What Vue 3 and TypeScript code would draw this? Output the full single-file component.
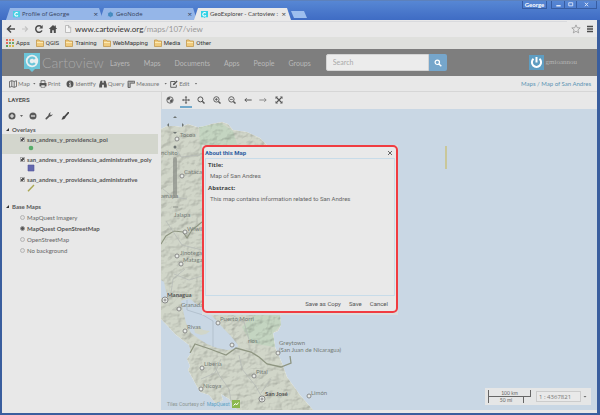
<script setup lang="ts">
import { ref } from 'vue'

interface Layer {
  id: string
  name: string
  kind: 'point' | 'polygon' | 'line'
  visible: boolean
}

interface Place {
  name: string
  x: number
  y: number
  lx: number
  ly: number
  major?: boolean
}

const bookmarks = ['QGIS', 'Training', 'WebMapping', 'Media', 'Other']
const navLinks = ['Layers', 'Maps', 'Documents', 'Apps', 'People', 'Groups']

const layers = ref<Layer[]>([
  { id: 'poi', name: 'san_andres_y_providencia_poi', kind: 'point', visible: true },
  { id: 'poly', name: 'san_andres_y_providencia_administrative_poly', kind: 'polygon', visible: true },
  { id: 'admin', name: 'san_andres_y_providencia_administrative', kind: 'line', visible: true },
])
const selectedLayer = ref('poi')

const baseMaps = ['MapQuest Imagery', 'MapQuest OpenStreetMap', 'OpenStreetMap', 'No background']
const baseMap = ref('MapQuest OpenStreetMap')

const search = ref('')
const address = ref('www.cartoview.org')
const scale = ref('1 : 4367821')
const dialogOpen = ref(true)

const places: Place[] = [
  { name: 'Tocoa', x: 16, y: 30, lx: 19, ly: 28 },
  { name: 'Catacamas', x: 21, y: 67, lx: 23, ly: 65 },
  { name: 'Wiwilí', x: 24, y: 123, lx: 26, ly: 122 },
  { name: 'Jinotega', x: 16, y: 147, lx: 19, ly: 146 },
  { name: 'Matagalpa', x: 20, y: 155, lx: 22, ly: 153 },
  { name: 'Managua', x: 4, y: 191, lx: 6, ly: 188, major: true },
  { name: 'Granada', x: 18, y: 200, lx: 20, ly: 198 },
  { name: 'Rivas', x: 24, y: 222, lx: 26, ly: 220 },
  { name: 'Puerto Morri', x: 57, y: 214, lx: 59, ly: 212 },
  { name: 'Liberia', x: 41, y: 259, lx: 43, ly: 257 },
  { name: 'Nicoya', x: 40, y: 280, lx: 42, ly: 279 },
  { name: 'Pital', x: 93, y: 267, lx: 95, ly: 265 },
  { name: 'San José', x: 101, y: 290, lx: 104, ly: 287, major: true },
  { name: 'Limón', x: 148, y: 287, lx: 150, ly: 286 },
]
</script>

<template>
  <div class="window">
    <header class="tabstrip">
      <div class="tab">
        <svg class="fav" viewBox="0 0 8 8"><path d="M0 0h8v7H5L4 8 3 7H0z" fill="#48cfe4" /><path d="M5.6 2.6A2 2 0 1 0 5.6 5" fill="none" stroke="#fff" stroke-width="1.2" /></svg>
        <span class="tab-title">Profile of George</span>
        <button class="close" aria-label="Close Profile of George">×</button>
      </div>
      <div class="tab">
        <svg class="fav" viewBox="0 0 8 8"><circle cx="4" cy="4" r="2.6" fill="#3c81b9" /><path d="M4 .8v6.4M1 2.4l6 3.2M7 2.4L1 5.6" stroke="#4b91c5" stroke-width="1" /></svg>
        <span class="tab-title">GeoNode</span>
        <button class="close" aria-label="Close GeoNode">×</button>
      </div>
      <div class="tab active">
        <svg class="fav" viewBox="0 0 8 8"><path d="M0 0h8v7H5L4 8 3 7H0z" fill="#33d2e6" /><path d="M5.6 2.6A2 2 0 1 0 5.6 5" fill="none" stroke="#fff" stroke-width="1.2" /></svg>
        <span class="tab-title">GeoExplorer - Cartoview :</span>
        <button class="close" aria-label="Close GeoExplorer">×</button>
      </div>
      <button class="new-tab" aria-label="New tab"></button>
      <div class="win-controls">
        <button class="user-btn">George</button>
        <div class="win-btns">
          <button aria-label="Minimize"><svg viewBox="0 0 8 8"><path d="M1.5 5.5h5" stroke="#fff" stroke-width="1.4" /></svg></button>
          <button aria-label="Maximize"><svg viewBox="0 0 8 8"><path d="M2 2h4.5v3.5H2z" fill="none" stroke="#dfe8fa" /></svg></button>
          <button class="wide" aria-label="Close window"><svg viewBox="0 0 8 8"><path d="M2.2 2l3.6 4M5.8 2L2.2 6" stroke="#dfe8fa" stroke-width="1.1" /></svg></button>
        </div>
      </div>
    </header>

    <div class="toolbar">
      <button class="back" aria-label="Back"><svg viewBox="0 0 10 10"><path d="M9 5H2M5 1.500L1.500 5 5 8.500" fill="none" stroke="#4c4c4c" stroke-width="1.500" /></svg></button>
      <button aria-label="Forward"><svg viewBox="0 0 10 10"><path d="M2 5h5M5 2.500L7.500 5 5 7.500" fill="none" stroke="#c4c4c4" stroke-width="1.200" /></svg></button>
      <button aria-label="Reload"><svg viewBox="0 0 10 10"><path d="M8 6.500A3.300 3.300 0 1 1 7.500 2.800" fill="none" stroke="#4c4c4c" stroke-width="1.500" /><path d="M8.700 1v3.500H5.200z" fill="#4c4c4c" /></svg></button>
      <button aria-label="Home"><svg viewBox="0 0 10 10"><path d="M5 1L.8 5h1.400v4h2V6.200h1.600V9h2V5h1.400L7.800 3.600V1.500H6.600v1z" fill="#4c4c4c" /></svg></button>
      <label class="address">
        <svg class="page-icon" viewBox="0 0 8 8"><path d="M1.500.5h3.200l2 2v5H1.500zM4.500.5v2.200h2.200" fill="#f4f4f4" stroke="#a9a9a9" stroke-width=".7" /></svg>
        <span class="url">{{ address }}<span class="path">/maps/107/view</span></span>
      </label>
      <button aria-label="Bookmark this page"><svg viewBox="0 0 10 10"><path d="M5 .9l1.200 2.800 3 .2-2.300 2 .8 3L5 7.300 2.300 8.900l.8-3-2.300-2 3-.2z" fill="none" stroke="#999" stroke-width=".8" /></svg></button>
      <button aria-label="Menu"><svg viewBox="0 0 10 10"><path d="M2 2.500h6M2 5h6M2 7.500h6" stroke="#4c4c4c" stroke-width="1.600" /></svg></button>
    </div>

    <nav class="bookmarks" aria-label="Bookmarks">
      <a href="#">
        <svg viewBox="0 0 8 8"><path d="M0 0h2v2H0zM0 3h2v2H0z" fill="#e36a5c" /><path d="M3 0h2v2H3zM6 0h2v2H6z" fill="#e7895b" /><path d="M3 3h2v2H3zM6 3h2v2H6z" fill="#6aa66a" /><path d="M0 6h2v2H0z" fill="#5b9d5b" /><path d="M3 6h2v2H3zM6 6h2v2H6z" fill="#d9b64d" /></svg>
        Apps
      </a>
      <a v-for="b in bookmarks" :key="b" href="#">
        <svg viewBox="0 0 8 8"><path d="M.5 1h2.700l.8 1h3.500v5.500h-7z" fill="#f0cb7d" stroke="#bd8f40" stroke-width=".7" /><path d="M1 3.500h6" stroke="#fff0c2" stroke-width=".8" /></svg>
        {{ b }}
      </a>
    </nav>

    <div class="site-header">
      <a class="brand" href="#" aria-label="Cartoview home">
        <svg viewBox="0 0 16 19"><path d="M0 0h16v16h-5l-3 3-3-3H0z" fill="#6cc5d9" /><circle cx="8" cy="8" r="6.200" fill="#e9eff1" /><path d="M10.800 6A3.400 3.400 0 1 0 10.800 10" fill="none" stroke="#6cc5d9" stroke-width="2.200" /></svg>
        <span>Cartoview</span>
      </a>
      <nav class="site-nav">
        <a v-for="n in navLinks" :key="n" href="#">{{ n }}</a>
      </nav>
      <form class="search" @submit.prevent>
        <input v-model="search" type="text" placeholder="Search" aria-label="Search" />
        <button aria-label="Submit search"><svg viewBox="0 0 8 8"><circle cx="3.300" cy="3.300" r="2.200" fill="none" stroke="#fff" stroke-width="1.200" /><path d="M5 5l2.300 2.300" stroke="#fff" stroke-width="1.400" /></svg></button>
      </form>
      <a class="account" href="#">
        <svg viewBox="0 0 15 15"><path d="M0 0h15v15H0z" fill="#5f9dc1" /><path d="M4.500 3.800a4.600 4.600 0 1 0 6 0" fill="none" stroke="#fff" stroke-width="2" /><path d="M7.500 2v5.500" stroke="#fff" stroke-width="2" /></svg>
        <span>gmioannou</span>
      </a>
    </div>

    <div class="actions">
      <button><svg viewBox="0 0 8 8"><path d="M.5 1.500l2.300-.8 2.400.8 2.300-.8v5.800l-2.300.8-2.400-.8-2.300.8zM2.800.7v5.800M5.200 1.500v5.800" fill="none" stroke="#555" stroke-width=".8" /></svg>Map<i class="caret"></i></button>
      <button><svg viewBox="0 0 8 8"><path d="M2 3V.7h4V3" fill="none" stroke="#555" stroke-width=".8" /><path d="M.5 3h7v3.300h-7z" fill="#555" /><path d="M2 5h4v2.300H2z" fill="#eee" stroke="#555" stroke-width=".6" /></svg>Print</button>
      <button class="act-identify"><svg viewBox="0 0 8 8"><circle cx="4" cy="4" r="3.500" fill="#555" /><path d="M3.200 3.500h1v2.300M3 6h2.200M3.600 2.200h.9" stroke="#eee" fill="none" stroke-width=".9" /></svg>Identify</button>
      <button><svg viewBox="0 0 8 8"><path d="M1.500.8h1.800v2h1.400v-2h1.800L7.800 5v2.500H4.900V4.800H3.100v2.700H.2V5z" fill="#555" /></svg>Query</button>
      <button><svg viewBox="0 0 8 8"><path d="M1 7.500V1.200h6.700v2H3.200v4.300z" fill="#bbb" stroke="#555" stroke-width=".8" /><path d="M3 1.200v1M5 1.200v1M1 4h1M1 6h1" stroke="#555" stroke-width=".6" /></svg>Measure<i class="caret far"></i></button>
      <button><svg viewBox="0 0 8 8"><path d="M5 1.500H.7v5.800h5.600V4.800" fill="none" stroke="#555" stroke-width=".9" /><path d="M2.800 5.300l.4-1.500L6.500.5l1.100 1.100-3.300 3.300z" fill="#555" /></svg>Edit<i class="caret far"></i></button>
      <div class="crumbs"><a href="#">Maps</a> / <span>Map of San Andres</span></div>
    </div>

    <main class="main">
      <aside class="sidebar">
        <h2>LAYERS</h2>
        <div class="layer-tools">
          <button aria-label="Add layers"><svg viewBox="0 0 8 8"><circle cx="4" cy="4" r="3.500" fill="#5a5a5a" /><path d="M2 4h4M4 2v4" stroke="#eee" stroke-width="1.100" /></svg><i class="caret far"></i></button>
          <button aria-label="Remove layer"><svg viewBox="0 0 8 8"><circle cx="4" cy="4" r="3.500" fill="#5a5a5a" /><path d="M2 4h4" stroke="#eee" stroke-width="1.200" /></svg></button>
          <button aria-label="Layer properties"><svg viewBox="0 0 8 8"><path d="M1.300 6.700l3.300-3.300" stroke="#555" stroke-width="1.700" stroke-linecap="round" /><path d="M7.500 1.900L6 3.200 4.800 2 6.100.5A2.300 2.300 0 0 0 3.600 3.300L4.700 4.400A2.300 2.300 0 0 0 7.500 1.900z" fill="#555" /></svg></button>
          <button aria-label="Edit styles"><svg viewBox="0 0 8 8"><path d="M7.500.5L4 4.500" stroke="#444" stroke-width="1.700" stroke-linecap="round" /><path d="M3.300 3.800l1.200 1.200C4.500 7.200 2 7.700.3 7.200c1.400-.5.900-3 3-3.400z" fill="#444" /></svg></button>
        </div>

        <section class="group">
          <h3><svg viewBox="0 0 4 4"><path d="M4 0v4H0z" fill="#333" /></svg>Overlays</h3>
          <div v-for="l in layers" :key="l.id" class="layer" :class="{ selected: l.id === selectedLayer }" @click="selectedLayer = l.id">
            <label><input v-model="l.visible" type="checkbox" /><span>{{ l.name }}</span></label>
            <svg class="legend" viewBox="0 0 8 8">
              <circle v-if="l.kind === 'point'" cx="4" cy="4" r="2.300" fill="#57ad68" />
              <path v-else-if="l.kind === 'polygon'" d="M1 1h6v6H1z" fill="#6468ae" stroke="#50549c" stroke-width=".6" />
              <path v-else d="M1 7.200L7 1" stroke="#aaa752" stroke-width="1.400" />
            </svg>
          </div>
        </section>

        <section class="group base">
          <h3><svg viewBox="0 0 4 4"><path d="M4 0v4H0z" fill="#333" /></svg>Base Maps</h3>
          <label v-for="b in baseMaps" :key="b" class="base-row" :class="{ chosen: b === baseMap }">
            <input v-model="baseMap" type="radio" name="basemap" :value="b" /><span>{{ b }}</span>
          </label>
        </section>
      </aside>

      <section class="map-panel">
        <div class="map-tools">
          <button aria-label="Globe"><svg viewBox="0 0 8 8"><circle cx="4" cy="4" r="3.200" fill="#ddd" stroke="#555" stroke-width=".8" /><path d="M1 2.500L3 1l1.500.8L3.500 3.500 1.500 4zM4 4.500l2-1.500 1 1-1 2-1.700.8z" fill="#555" /></svg></button>
          <button class="current" aria-label="Pan map"><svg viewBox="0 0 8 8"><path d="M4 .8v6.400M.8 4h6.400" stroke="#555" stroke-width=".9" /><path d="M4 0l1.300 1.500H2.700zM4 8l1.300-1.500H2.700zM0 4l1.500-1.300v2.600zM8 4L6.500 2.700v2.600z" fill="#555" /></svg></button>
          <button aria-label="Zoom box"><svg viewBox="0 0 8 8"><circle cx="3.400" cy="3.400" r="2.500" fill="none" stroke="#555" /><path d="M5.300 5.300l2.200 2.200" stroke="#555" stroke-width="1.400" /></svg></button>
          <button aria-label="Zoom in"><svg viewBox="0 0 8 8"><circle cx="3.400" cy="3.400" r="2.700" fill="none" stroke="#555" stroke-width=".9" /><path d="M5.400 5.400l2.100 2.100" stroke="#555" stroke-width="1.400" /><path d="M2 3.400h2.800M3.400 2v2.800" stroke="#555" stroke-width=".8" /></svg></button>
          <button aria-label="Zoom out"><svg viewBox="0 0 8 8"><circle cx="3.400" cy="3.400" r="2.700" fill="none" stroke="#555" stroke-width=".9" /><path d="M5.400 5.400l2.100 2.100" stroke="#555" stroke-width="1.400" /><path d="M2 3.400h2.800" stroke="#555" stroke-width=".8" /></svg></button>
          <button aria-label="Previous extent"><svg viewBox="0 0 8 8"><path d="M7.700 4H1M2.700 2.300L.8 4l1.900 1.700" fill="none" stroke="#555" /></svg></button>
          <button aria-label="Next extent"><svg viewBox="0 0 8 8"><path d="M.3 4H7M5.300 2.300L7.200 4 5.300 5.700" fill="none" stroke="#8a8a8a" /></svg></button>
          <button aria-label="Zoom to full extent"><svg viewBox="0 0 8 8"><path d="M1.500 1.500l5 5M6.500 1.500l-5 5" stroke="#555" stroke-width="1.100" /><path d="M.5 3V.5H3zM5 .5h2.500V3zM.5 5v2.500H3zM7.500 5v2.500H5z" fill="#555" /></svg></button>
        </div>

        <div class="map">
          <svg class="canvas" role="img" aria-label="Map of Central America">
            <defs>
              <filter id="relief" x="0" y="0" width="100%" height="100%" color-interpolation-filters="sRGB">
                <feTurbulence type="fractalNoise" baseFrequency="0.11 0.15" numOctaves="4" seed="7" />
                <feDiffuseLighting lighting-color="#fff" surfaceScale="0.700" diffuseConstant="1.200"><feDistantLight azimuth="225" elevation="55" /></feDiffuseLighting>
                <feComposite in2="SourceGraphic" operator="in" result="lit" />
                <feBlend in="SourceGraphic" in2="lit" mode="multiply" />
              </filter>
            </defs>
            <g filter="url(#relief)">
              <path d="M0 20L6 17 14 17 20 18 27 15 39 19 50 15 61 13 67 15 72 21 86 23 99 29 107 37 107 206H119L120 216 117 222 112 224 114 238 121 254 126 268 139 286 153 302H77L72 296 68 290 60 285 62 291 55 295 48 286 39 283 34 274 27 261 29 257 26 250 30 244 28 236 15 226 0 210z" fill="#d1d6c9" />
              <path d="M38 18l22-4 12 8 8 26-40 6zM93 206h26l1 10-8 8 2 14-24-4-9-16z" fill="#c4d5c1" />
            </g>
            <path d="M22 201L20 192 28 189 34 194 44 200 57 213 62 219 69 226 77 236 76 240 66 241 56 239 46 235 38 230 30 224 25 214zM0 171l3 2 2 10 4 3-4 3H0z" fill="#c9d7e4" />
            <path d="M33 220l6-2 3 3 7 1-4 3-5 1-6-2z" fill="#d1d6c9" />
            <path d="M26 191v10l16 5 10 6v26" fill="none" stroke="#a9b8c4" stroke-width=".7" />
            <path d="M0 135L5 127 13 122 22 123 26 129 31 121 41 113" fill="none" stroke="#8e9581" stroke-width="1.100" />
            <path d="M29 244l5-9 15 5 16 6 10-7 15 4 8 5 8 7 14 3 10-4-1-7" fill="none" stroke="#8e9581" stroke-width="1.300" />
            <path d="M52 254l6 12 10 14 2 12M78 246l3 14 13 16 8 14M71 206l12 7 6 21M60 250l-6 14-14 6M110 270l-10 14M24 160l-12 10-2 14M13 165l15 6 13-4M2 80l10 8 14 2M14 38l6 10 19-2M5 112l16 24 20 5" fill="none" stroke="#b3b8b5" stroke-width=".7" />
            <path d="M285 37v23" stroke="#c9c79a" stroke-width="2" />
            <g fill="#e8ebe8" stroke="#777" stroke-width=".8">
              <g v-for="p in places" :key="p.name">
                <circle :cx="p.x" :cy="p.y" :r="p.major ? 3 : 2" />
                <circle v-if="p.major" :cx="p.x" :cy="p.y" r="1" />
              </g>
              <circle cx="71" cy="236" r="2" /><circle cx="117" cy="244" r="2" />
            </g>
            <text v-for="p in places" :key="p.name" :x="p.lx" :y="p.ly" :class="{ major: p.major }">{{ p.name }}</text>
            <text x="13" y="108">Jalapa</text>
            <text x="0" y="46">nchito</text>
            <text x="0" y="89">amapa</text>
            <text x="87" y="234">rlos</text>
            <text x="118" y="236">Greytown</text>
            <text x="118" y="243">(San Juan de Nicaragua)</text>
            <g fill="#6e7573">
              <path d="M14 7l2 2h-4zM14 25l2-2h-4zM6 16l2-2v4zM23 16l-2-2v4z" />
              <circle cx="14" cy="38" r="1.500" />
            </g>
            <rect x="12" y="48" width="4" height="41" rx="2" fill="#8c9089" opacity=".75" />
            <path d="M12 98h5" stroke="#8c9089" />
          </svg>
          <footer class="map-footer">
            <p class="credit">Tiles Courtesy of <a href="#">MapQuest</a>
              <svg viewBox="0 0 8 8"><path d="M0 0h8v8H0z" fill="#8cb850" /><path d="M1.500 5.500l2-2 1 1.500 2-2.500" fill="none" stroke="#fff" /></svg>
            </p>
            <div class="scale-box">
              <div class="scale-line">
                <span class="km">100 km</span>
                <span class="mi">50 mi</span>
              </div>
              <input v-model="scale" type="text" aria-label="Map scale" />
              <button aria-label="Choose scale"><i class="caret"></i></button>
            </div>
          </footer>
        </div>
      </section>
    </main>

    <div v-if="dialogOpen" class="dialog-shell">
      <div class="dialog" role="dialog" aria-labelledby="about-title">
        <header>
          <h2 id="about-title">About this Map</h2>
          <button aria-label="Close dialog" @click="dialogOpen = false"><svg viewBox="0 0 6 6"><path d="M1 1l4 4M5 1L1 5" stroke="#666" /></svg></button>
        </header>
        <dl>
          <dt>Title:</dt>
          <dd>Map of San Andres</dd>
          <dt>Abstract:</dt>
          <dd>This map contains information related to San Andres</dd>
        </dl>
        <footer>
          <button>Save as Copy</button>
          <button>Save</button>
          <button @click="dialogOpen = false">Cancel</button>
        </footer>
      </div>
    </div>
  </div>
</template>

<style>
body {
  background: #e8e8e8;
}
</style>

<style scoped>
* {
  box-sizing: border-box;
  margin: 0;
  padding: 0;
}

button {
  display: flex;
  align-items: center;
  border: 0;
  background: none;
  color: inherit;
  font: inherit;
}

a {
  color: inherit;
  text-decoration: none;
}

svg {
  display: block;
  flex: none;
}

.window {
  position: relative;
  display: flex;
  flex-direction: column;
  min-height: 100vh;
  border: solid #3a5e9e;
  border-width: 0 3px 2px 2px;
  background: #e8e8e8;
  color: #666;
  font: 6px/8px Lato, sans-serif;
}

/* Browser chrome */
.tabstrip {
  display: flex;
  align-items: flex-end;
  height: 20px;
  margin-right: -3px;
  margin-left: -2px;
  padding-left: 6px;
  border-top: 1px solid #5d81bb;
  background: linear-gradient(#5787d4, #3f6cc4);
}

.tab {
  display: flex;
  align-items: center;
  width: 97px;
  height: 12px;
  margin-right: -3px;
  padding: 0 5px 0 7px;
  background: #95b6e8;
  color: #34405a;
  font: 6px/12px "Open Sans", sans-serif;
  clip-path: polygon(4px 0, 93px 0, 100% 100%, 0 100%);
}

.tab.active {
  background: #e9e9e9;
  color: #444;
}

.fav {
  width: 7px;
  height: 7px;
  margin-right: 2px;
}

.tab-title {
  flex: 1;
  white-space: nowrap;
}

.tab.active .tab-title {
  font-family: Lato, sans-serif;
}

.close {
  font: 8px/8px "Open Sans", sans-serif;
}

.new-tab {
  width: 16px;
  height: 7px;
  margin: 0 0 2px 3px;
  background: #9dbeee;
  clip-path: polygon(0 0, 13px 0, 100% 100%, 3px 100%);
}

.win-controls {
  display: flex;
  align-items: flex-start;
  gap: 4px;
  height: 100%;
  margin-right: 3px;
  margin-left: auto;
}

.user-btn {
  justify-content: center;
  width: 25px;
  height: 8px;
  border: 1px solid #385da1;
  border-top: 0;
  color: #fff;
  font: bold 6px/8px Lato, sans-serif;
}

.win-btns {
  display: flex;
  height: 8px;
  border: 1px solid #385da1;
  border-top: 0;
}

.win-btns button {
  justify-content: center;
  width: 12px;
}

.win-btns button + button {
  border-left: 1px solid #385da1;
}

.win-btns .wide {
  width: 20px;
}

.win-btns svg {
  width: 7px;
  height: 7px;
}

.toolbar {
  display: flex;
  align-items: center;
  gap: 4px;
  height: 17px;
  padding: 0 2px 0 4px;
  background: #e9e9e9;
}

.toolbar svg {
  width: 10px;
  height: 10px;
}

.address {
  display: flex;
  flex: 1;
  align-items: center;
  gap: 3px;
  margin-left: 2px;
  border-top: 1px solid #d9dadd;
  color: #333;
  font: 8px/15px Lato, sans-serif;
}

.address .page-icon {
  width: 8px;
  height: 8px;
}

.path {
  color: #999;
}

.bookmarks {
  display: flex;
  align-items: center;
  gap: 6px;
  height: 12px;
  padding-left: 4px;
  background: #dfe0dd;
  color: #333;
  font: 6px/10px Roboto, sans-serif;
}

.bookmarks a {
  display: flex;
  align-items: center;
  gap: 2px;
}

.bookmarks svg {
  width: 8px;
  height: 8px;
}

/* Site header */
.site-header {
  display: flex;
  align-items: center;
  height: 27px;
  padding: 0 20px 0 22px;
  background: #7e7e7e;
}

.brand {
  display: flex;
  align-items: center;
  gap: 2px;
  width: 86px;
  color: #a9a9a9;
  font: 300 14px/20px Lato, sans-serif;
}

.brand svg {
  width: 16px;
  height: 19px;
}

.site-nav {
  display: flex;
  gap: 14px;
  color: #b9b9b9;
  font: 7px/12px Lato, sans-serif;
}

.search {
  display: flex;
  width: 121px;
  height: 17px;
  margin-left: 15px;
}

.search input {
  flex: 1;
  min-width: 0;
  padding: 0 6px;
  border: 1px solid #d4d4d4;
  border-radius: 2px 0 0 2px;
  background: #ececec;
  font: 7px/15px Lato, sans-serif;
}

.search input::placeholder {
  color: #aaa;
}

.search button {
  justify-content: center;
  width: 18px;
  border-radius: 0 2px 2px 0;
  background: #76a6cb;
}

.search svg {
  width: 8px;
  height: 8px;
}

.account {
  display: flex;
  align-items: center;
  gap: 2px;
  margin-left: auto;
  color: #b4b4b4;
  font: 7px/15px "Liberation Serif", serif;
}

.account svg {
  width: 15px;
  height: 15px;
}

/* Action bar */
.actions {
  display: flex;
  align-items: center;
  gap: 3px;
  height: 16px;
  padding: 0 6px 0 7px;
  border-bottom: 1px solid #d6d6d6;
  color: #777;
}

.actions button {
  gap: 1px;
}

.actions .act-identify {
  margin-left: 3px;
}

.actions svg {
  width: 8px;
  height: 8px;
}

.caret {
  width: 3px;
  height: 2px;
  margin-left: 2px;
  background: #666;
  clip-path: polygon(0 0, 100% 0, 50% 100%);
}

.caret.far {
  margin-left: 4px;
}

.crumbs {
  margin-left: auto;
  color: #5b93b3;
}

/* Layout */
.main {
  display: flex;
  flex: 1;
  padding-bottom: 3px;
}

.sidebar {
  width: 159px;
  padding-right: 3px;
}

.sidebar h2 {
  padding: 4px 6px;
  color: #555;
  font: bold 6px/8px Roboto, sans-serif;
}

.layer-tools {
  display: flex;
  gap: 8px;
  padding: 4px 6px 5px;
}

.layer-tools button:first-child {
  margin-right: -2px;
}

.layer-tools svg {
  width: 8px;
  height: 8px;
}

.group h3 {
  display: flex;
  align-items: center;
  gap: 3px;
  height: 9px;
  padding-left: 4px;
  color: #555;
  font: bold 6px/9px Lato, sans-serif;
}

.group h3 svg {
  width: 3px;
  height: 3px;
}

.layer {
  height: 20px;
  padding: 1px 0 0 18px;
}

.layer.selected {
  background: #d3d6cd;
}

.layer label,
.base-row {
  display: flex;
  align-items: center;
  gap: 2px;
}

.layer label {
  height: 9px;
  color: #555;
  font: bold 6px/9px Lato, sans-serif;
}

.legend {
  width: 8px;
  height: 8px;
  margin-left: 7px;
}

input[type="checkbox"],
input[type="radio"] {
  width: 5px;
  height: 5px;
  appearance: none;
  border: 1px solid #b5b5b5;
  background: #e2e2e2;
}

input[type="checkbox"]:checked {
  border-color: #aaa;
  background: linear-gradient(135deg, #e2e2e2 30%, #555 30% 70%, #e2e2e2 70%);
}

input[type="radio"] {
  border-radius: 50%;
}

input[type="radio"]:checked {
  border-color: #999;
  background: #555;
}

.group.base {
  padding-top: 8px;
}

.base-row {
  height: 11px;
  padding-left: 18px;
}

.base .base-row:nth-of-type(1) {
  margin-top: 1px;
}

.chosen {
  color: #555;
  font-weight: bold;
}

.map-panel {
  display: flex;
  flex: 1;
  flex-direction: column;
  min-width: 0;
}

.map-tools {
  display: flex;
  justify-content: space-between;
  width: 124px;
  height: 17px;
  padding-left: 2px;
  border-left: 1px solid #d4d4d4;
}

.map-tools button {
  justify-content: center;
  width: 12px;
  height: 16px;
  border: solid transparent;
  border-width: 2px 0;
}

.map-tools button.current {
  border-bottom-color: #72a9cb;
}

.map-tools svg {
  width: 8px;
  height: 8px;
}

.map {
  position: relative;
  display: flex;
  flex: 1;
  flex-direction: column;
  justify-content: flex-end;
  background: #c9d7e4;
}

.canvas {
  position: absolute;
  inset: 0;
  width: 100%;
  height: 100%;
  font: 6px Lato, sans-serif;
}

.canvas text {
  fill: #757c77;
}

.canvas .major {
  fill: #555;
  font-weight: bold;
}

.map-footer {
  position: relative;
  display: flex;
  align-items: flex-end;
  justify-content: space-between;
  padding: 0 6px 5px;
}

.credit {
  display: flex;
  align-items: center;
  gap: 2px;
  margin-bottom: -3px;
  color: #8c9692;
  font: 5px/8px Roboto, sans-serif;
}

.credit a {
  color: #5ea3c4;
}

.credit svg {
  width: 8px;
  height: 8px;
}

.scale-box {
  display: flex;
  align-items: center;
  width: 106px;
  height: 17px;
  padding: 0 3px;
  background: #e5e6e6;
}

.scale-line {
  width: 43px;
  font: 5px/6px Lato, sans-serif;
  text-align: center;
}

.km,
.mi {
  display: block;
  height: 6px;
  border: solid #666;
}

.km {
  height: 7px;
  border-width: 0 1px 1px;
}

.mi {
  width: 36px;
  border-width: 0 1px;
}

.scale-box input {
  width: 45px;
  height: 11px;
  margin-left: 5px;
  padding: 0 2px;
  border: 1px solid #ccc;
  background: #e9e9e9;
  color: #777;
  font: 6px/9px "Open Sans", sans-serif;
}

.scale-box .caret {
  width: 4px;
}

/* About dialog */
.dialog-shell {
  position: absolute;
  top: 145px;
  left: 200px;
  width: 196px;
  height: 170px;
  background: #dcdddd;
}

.dialog {
  display: flex;
  flex-direction: column;
  height: 168px;
  border: 2px solid #f03c41;
  border-radius: 5px;
  background: #e9e9e9;
  font: 6px/10px Roboto, sans-serif;
}

.dialog header {
  display: flex;
  align-items: center;
  justify-content: space-between;
  height: 11px;
  padding: 0 3px 0 1px;
}

.dialog h2 {
  color: #2e5d9f;
  font: bold 6px/10px Roboto, sans-serif;
}

.dialog header svg {
  width: 6px;
  height: 6px;
}

.dialog dl {
  flex: 1;
  margin: 0 1px;
  padding: 1px 2px;
  border: 1px solid #c8dce9;
}

.dialog dt {
  color: #444;
  font: bold 6px/10px "Open Sans", sans-serif;
}

.dialog dd {
  padding: 1px 2px 2px;
}

.dialog footer {
  display: flex;
  justify-content: flex-end;
  gap: 8px;
  padding: 3px 8px 2px;
  color: #555;
}
</style>
